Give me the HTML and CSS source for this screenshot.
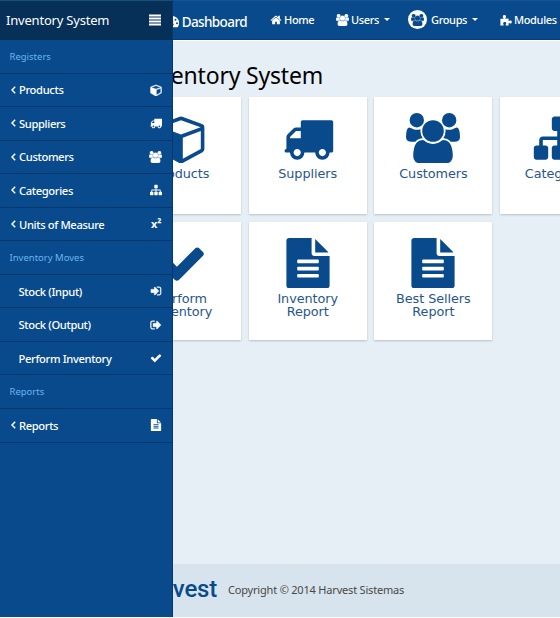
FILE: index.html
```html
<!DOCTYPE html>
<html lang="en">
<head>
<meta charset="utf-8">
<title>Inventory System</title>
<link rel="stylesheet" href="styles.css">
</head>
<body>
<svg class="defs" aria-hidden="true">
<symbol id="bars" viewBox="0 0 12 12"><path d="M0 .5h12v2H0zM0 3.500h12v2H0zM0 6.500h12v2H0zM0 9.500h12v2H0z"/></symbol>
<symbol id="check" viewBox="0 0 1792 1792"><path d="M1671 566q0 40-28 68l-724 724-136 136q-28 28-68 28t-68-28l-136-136-362-362q-28-28-28-68t28-68l136-136q28-28 68-28t68 28l294 295 656-657q28-28 68-28t68 28l136 136q28 28 28 68z"/></symbol>
<symbol id="truck" viewBox="0 0 1792 1792"><path d="M640 1408q0-52-38-90t-90-38-90 38-38 90 38 90 90 38 90-38 38-90zm-384-512h384v-256h-158q-13 0-22 9l-195 195q-9 9-9 22v30zm1280 512q0-52-38-90t-90-38-90 38-38 90 38 90 90 38 90-38 38-90zm256-1088v1024q0 15-4 26.500t-13.500 18.500-16.500 11.500-23.500 6-22.500 2-25.500 0-22.500-.5q0 106-75 181t-181 75-181-75-75-181h-384q0 106-75 181t-181 75-181-75-75-181h-64q-3 0-22.500.5t-25.500 0-22.500-2-23.500-6-16.500-11.500-13.500-18.500-4-26.500q0-26 19-45t45-19v-320q0-8-.5-35t0-38 2.500-34.500 6.500-37 14-30.500 22.500-30l198-198q19-19 50.500-32t58.500-13h160v-192q0-26 19-45t45-19h1024q26 0 45 19t19 45z"/></symbol>
<symbol id="file" viewBox="0 0 1536 1792"><path d="M1468 476q14 14 28 36h-472v-472q22 14 36 28zm-476 164h544v1056q0 40-28 68t-68 28h-1344q-40 0-68-28t-28-68v-1600q0-40 28-68t68-28h800v544q0 40 28 68t68 28zm160 736v-64q0-14-9-23t-23-9h-704q-14 0-23 9t-9 23v64q0 14 9 23t23 9h704q14 0 23-9t9-23zm0-256v-64q0-14-9-23t-23-9h-704q-14 0-23 9t-9 23v64q0 14 9 23t23 9h704q14 0 23-9t9-23zm0-256v-64q0-14-9-23t-23-9h-704q-14 0-23 9t-9 23v64q0 14 9 23t23 9h704q14 0 23-9t9-23z"/></symbol>
<symbol id="home" viewBox="0 0 1792 1792"><path d="M1472 992v480q0 26-19 45t-45 19h-384v-384h-256v384h-384q-26 0-45-19t-19-45v-480q0-1 .5-3t.5-3l575-474 575 474q1 2 1 6zm223-69l-62 74q-8 9-21 11h-3q-13 0-21-7l-692-577-692 577q-12 8-24 7-13-2-21-11l-62-74q-8-10-7-23.500t11-21.500l719-599q32-26 76-26t76 26l244 204v-195q0-14 9-23t23-9h192q14 0 23 9t9 23v408l219 182q10 8 11 21.500t-7 23.500z"/></symbol>
<symbol id="sitemap" viewBox="0 0 1792 1792"><path d="M1792 1248v320q0 40-28 68t-68 28h-320q-40 0-68-28t-28-68v-320q0-40 28-68t68-28h96v-192h-512v192h96q40 0 68 28t28 68v320q0 40-28 68t-68 28h-320q-40 0-68-28t-28-68v-320q0-40 28-68t68-28h96v-192h-512v192h96q40 0 68 28t28 68v320q0 40-28 68t-68 28h-320q-40 0-68-28t-28-68v-320q0-40 28-68t68-28h96v-192q0-52 38-90t90-38h512v-192h-96q-40 0-68-28t-28-68v-320q0-40 28-68t68-28h320q40 0 68 28t28 68v320q0 40-28 68t-68 28h-96v192h512q52 0 90 38t38 90v192h96q40 0 68 28t28 68z"/></symbol>
<symbol id="users" viewBox="0 0 1920 1792"><path d="M593 896q-162 5-265 128h-134q-82 0-138-40.500t-56-118.500q0-353 124-353 6 0 43.500 21t97.500 42.500 119 21.500q67 0 133-23-5 37-5 66 0 139 81 256zm1071 637q0 120-73 189.500t-194 69.500h-874q-121 0-194-69.500t-73-189.500q0-53 3.500-103.500t14-109 26.500-108.500 43-97.500 62-81 85.500-53.500 111.500-20q10 0 43 21.500t73 48 107 48 135 21.500 135-21.500 107-48 73-48 43-21.500q61 0 111.500 20t85.500 53.500 62 81 43 97.500 26.500 108.500 14 109 3.500 103.500zm-1024-1277q0 106-75 181t-181 75-181-75-75-181 75-181 181-75 181 75 75 181zm704 384q0 159-112.500 271.500t-271.500 112.500-271.500-112.500-112.500-271.500 112.500-271.500 271.500-112.500 271.500 112.500 112.500 271.500zm576 225q0 78-56 118.500t-138 40.500h-134q-103-123-265-128 81-117 81-256 0-29-5-66 66 23 133 23 59 0 119-21.500t97.500-42.500 43.500-21q124 0 124 353zm-128-609q0 106-75 181t-181 75-181-75-75-181 75-181 181-75 181 75 75 181z"/></symbol>
<symbol id="cube" viewBox="0 0 1664 1792"><path d="M896 1629l640-349v-636l-640 233v752zm-64-865l698-254-698-254-698 254zm832-252v768q0 35-18 65t-49 47l-704 384q-28 16-61 16t-61-16l-704-384q-31-17-49-47t-18-65v-768q0-40 23-73t61-47l704-256q22-8 44-8t44 8l704 256q38 14 61 47t23 73z"/></symbol>
<symbol id="signin" viewBox="0 0 1792 1792"><path d="M1312 896q0 26-19 45l-544 544q-19 19-45 19t-45-19-19-45v-288h-448q-26 0-45-19t-19-45v-384q0-26 19-45t45-19h448v-288q0-26 19-45t45-19 45 19l544 544q19 19 19 45zm352-352v704q0 119-84.500 203.500t-203.500 84.500h-320q-13 0-22.500-9.500t-9.500-22.500q0-4-1-20t-.5-26.500 3-23.500 10-19.500 20.500-6.500h320q66 0 113-47t47-113v-704q0-66-47-113t-113-47h-312l-11.500-1-11.500-3-8-5.500-7-9-2-13.500q0-4-1-20t-.5-26.500 3-23.500 10-19.500 20.500-6.500h320q119 0 203.500 84.500t84.500 203.500z"/></symbol>
<symbol id="signout" viewBox="0 0 1792 1792"><path d="M704 1440q0 4 1 20t.5 26.500-3 23.500-10 19.500-20.500 6.500h-320q-119 0-203.500-84.500t-84.500-203.500v-704q0-119 84.500-203.500t203.500-84.500h320q13 0 22.500 9.500t9.500 22.500q0 4 1 20t.5 26.500-3 23.500-10 19.500-20.500 6.500h-320q-66 0-113 47t-47 113v704q0 66 47 113t113 47h312l11.500 1 11.500 3 8 5.500 7 9 2 13.500zm928-544q0 26-19 45l-544 544q-19 19-45 19t-45-19-19-45v-288h-448q-26 0-45-19t-19-45v-384q0-26 19-45t45-19h448v-288q0-26 19-45t45-19 45 19l544 544q19 19 19 45z"/></symbol>
<symbol id="puzzle" viewBox="0 0 14 14"><path d="M.5 5.500H4C4.200 4.500 3.300 4.200 3.300 3 3.300 1.800 4.200 1.200 5.200 1.200s1.900.7 1.900 1.800C7.100 4.200 6.200 4.600 6.500 5.600L10 5.300V8.200c.8.300 1.200-.7 2.200-.7 1 0 1.600.8 1.600 1.800s-.6 1.800-1.600 1.800c-1 0-1.500-.8-2.200-.5V13.300H6.600C6.300 12.300 7.300 12 7.300 10.900 7.300 9.900 6.500 9.300 5.500 9.300s-1.800.7-1.800 1.700c0 1 .8 1.400.5 2.300H.5z"/></symbol>
<symbol id="gauge" viewBox="0 0 14 14"><path fill-rule="evenodd" d="M7 1a7 7 0 0 0-6 10.700q.3.500.9.500h10.200q.6 0 .9-.5A7 7 0 0 0 7 1zM7 2.200a1 1 0 1 1 0 2 1 1 0 0 1 0-2zM3.500 3.700a1 1 0 1 1 0 2 1 1 0 0 1 0-2zm7 0a1 1 0 1 1 0 2 1 1 0 0 1 0-2zM2 7.200a1 1 0 1 1 0 2 1 1 0 0 1 0-2zm10 0a1 1 0 1 1 0 2 1 1 0 0 1 0-2zM7.500 5.500l.9.200-.6 2.500a1.500 1.500 0 1 1-.9-.2z"/></symbol>
<symbol id="angle" viewBox="0 0 5 8"><path fill="none" stroke="currentColor" stroke-width="1.500" d="M4.200.8L1 4l3.200 3.200"/></symbol>
</svg>

<div class="page">
  <header class="navbar">
    <div class="brand"><svg class="brand-icon"><use href="#gauge"/></svg><span>Dashboard</span></div>
    <nav class="links">
      <a class="link home"><svg class="ico"><use href="#home"/></svg><span>Home</span></a>
      <a class="link users"><svg class="ico wide heavy"><use href="#users"/></svg><span>Users</span><i class="caret"></i></a>
      <a class="link groups"><b class="disc"><svg class="ico wide heavy"><use href="#users"/></svg></b><span>Groups</span><i class="caret"></i></a>
      <a class="link modules"><svg class="ico"><use href="#puzzle"/></svg><span>Modules</span></a>
    </nav>
  </header>
  <main class="content">
    <h1>Inventory System</h1>
    <div class="tiles">
      <a class="tile"><svg class="cube"><use href="#cube"/></svg><span>Products</span></a>
      <a class="tile"><svg><use href="#truck"/></svg><span>Suppliers</span></a>
      <a class="tile"><svg><use href="#users"/></svg><span>Customers</span></a>
      <a class="tile"><svg><use href="#sitemap"/></svg><span>Categories</span></a>
      <a class="tile"><svg><use href="#check"/></svg><span>Perform<br>Inventory</span></a>
      <a class="tile"><svg><use href="#file"/></svg><span>Inventory<br>Report</span></a>
      <a class="tile"><svg><use href="#file"/></svg><span>Best Sellers<br>Report</span></a>
    </div>
  </main>
  <footer class="footer"><span class="logo">harvest</span><span class="copy">Copyright © 2014 Harvest Sistemas</span></footer>
</div>

<aside class="sidebar">
  <div class="side-head"><span>Inventory System</span><svg><use href="#bars"/></svg></div>
  <div class="label">Registers</div>
  <a class="item"><svg class="angle"><use href="#angle"/></svg><span>Products</span><svg class="ico heavy"><use href="#cube"/></svg></a>
  <a class="item"><svg class="angle"><use href="#angle"/></svg><span>Suppliers</span><svg class="ico"><use href="#truck"/></svg></a>
  <a class="item"><svg class="angle"><use href="#angle"/></svg><span>Customers</span><svg class="ico wide heavy"><use href="#users"/></svg></a>
  <a class="item"><svg class="angle"><use href="#angle"/></svg><span>Categories</span><svg class="ico"><use href="#sitemap"/></svg></a>
  <a class="item"><svg class="angle"><use href="#angle"/></svg><span>Units of Measure</span><b class="sup">x²</b></a>
  <div class="label">Inventory Moves</div>
  <a class="item plain"><span>Stock (Input)</span><svg class="ico heavy"><use href="#signin"/></svg></a>
  <a class="item plain"><span>Stock (Output)</span><svg class="ico heavy"><use href="#signout"/></svg></a>
  <a class="item plain"><span>Perform Inventory</span><svg class="ico"><use href="#check"/></svg></a>
  <div class="label">Reports</div>
  <a class="item"><svg class="angle"><use href="#angle"/></svg><span>Reports</span><svg class="ico"><use href="#file"/></svg></a>
</aside>
</body>
</html>
```
FILE: styles.css
```css
* { box-sizing: border-box; }
body { margin: 0; height: 618px; overflow: hidden; background: #fff; font-family: "Noto Sans", "Open Sans", sans-serif; }
svg { display: block; fill: currentColor; flex: none; }
.defs { display: none; }

.page { width: 560px; height: 617px; display: flex; flex-direction: column; background: #e7eff6; overflow: hidden; }
.navbar { height: 41px; flex: none; display: flex; align-items: center; background: #084a8b; border-top: 1px solid #145591; border-bottom: 1px solid #fff; box-shadow: inset 0 -1px #063a78; color: #fff; }
.brand { width: 247px; display: flex; justify-content: flex-end; align-items: center; gap: 3px; font-size: 13.500px; font-weight: 500; letter-spacing: -.6px; padding-top: 2px; }
.brand-icon { width: 14px; height: 14px; }
.links { display: flex; align-items: center; font-size: 11px; font-weight: 500; letter-spacing: -.35px; height: 100%; padding-bottom: 2px; }
.link { display: flex; align-items: center; gap: 2px; flex: none; }
.home { width: 66px; margin-left: 23px; }
.users { width: 72px; }
.groups { width: 92px; }
.modules { width: 60px; }
.ico { width: 12px; height: 12px; }
.wide { width: 13px; }
.heavy { stroke: currentColor; stroke-width: 50px; }
.caret { border: 3px solid transparent; border-top-color: #fff; border-bottom: 0; margin-left: 3px; }
.disc { width: 19px; height: 19px; border-radius: 50%; background: #fff; color: #084a8b; display: flex; align-items: center; justify-content: center; margin-right: 2px; }

.content { flex: 1; overflow: hidden; }
h1 { margin: 0; width: 323px; height: 55.500px; padding-top: 17px; text-align: right; font-size: 23px; letter-spacing: -.2px; line-height: 34px; font-weight: 400; color: #000; white-space: nowrap; }
.tiles { display: grid; grid-template-columns: repeat(4, 118px); grid-auto-rows: 117.500px; gap: 8px 7.700px; margin-left: 123px; }
.tile { background: #fff; box-shadow: 0 1px 2px #b8c1c8; padding-top: 16px; display: flex; flex-direction: column; align-items: center; color: #084a8b; font-family: "DejaVu Sans", sans-serif; font-size: 12.800px; letter-spacing: -.06px; line-height: 13px; text-align: center; }
.tile svg { width: 54px; height: 50.400px; margin-bottom: 4px; }
.tile .cube { margin-right: 3px; }
.tile span { color: #28558c; }

.footer { height: 53px; flex: none; background: #d8e4ed; display: flex; align-items: center; color: #484848; }
.logo { width: 217px; text-align: right; font: 500 24px Roboto, sans-serif; letter-spacing: -.2px; color: #084a8b; padding-bottom: 3px; }
.copy { margin-left: 11px; font-size: 11px; letter-spacing: -.19px; white-space: nowrap; padding-bottom: 2px; }

.sidebar { position: absolute; left: 0; top: 0; width: 173px; height: 617px; background: #084a8b; border-right: 1px solid #06386f; color: #fff; }
.side-head { height: 40px; background: #063058; border-top: 1px solid #174f7a; display: flex; align-items: center; justify-content: space-between; padding: 0 11px 2px 6px; font-size: 13px; letter-spacing: -.2px; }
.side-head svg { width: 12px; height: 12px; }
.label, .item { height: 33.550px; border-bottom: 1px solid #05366d; display: flex; align-items: center; }
.label { padding-left: 9.500px; font-size: 9.500px; color: #69b5f2; }
.item { padding: 0 10.500px 0 11px; font-size: 11.200px; font-weight: 500; letter-spacing: -.36px; white-space: nowrap; }
.item span { margin-right: auto; }
.angle { width: 5px; height: 8px; margin-right: 3px; }
.plain { padding-left: 18.500px; }
.sup { font-size: 11px; line-height: 12px; letter-spacing: 0; }
```
